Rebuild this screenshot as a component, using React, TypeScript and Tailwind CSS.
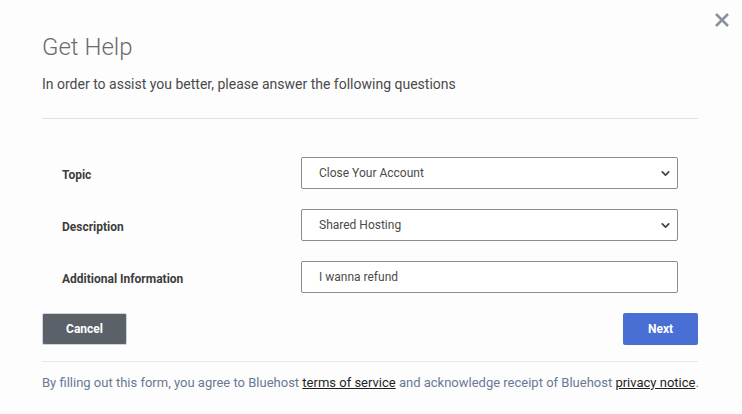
import { ChevronDown } from "lucide-react";

const rows = [
  { label: "Topic", value: "Close Your Account", select: true },
  { label: "Description", value: "Shared Hosting", select: true },
  { label: "Additional Information", value: "I wanna refund", select: false },
];

export default function App() {
  return (
    <div className="relative w-[742px] h-[414px] overflow-hidden bg-[#fdfdfe] font-['Roboto',sans-serif]">
      <button className="absolute right-[10px] top-[10px] w-[20px] h-[20px] flex items-center justify-center text-[#8a929c]">
        <svg width="16" height="16" viewBox="0 0 16 16" fill="none" stroke="currentColor" strokeWidth="2.6" strokeLinecap="butt">
          <path d="M2 2 L14 14 M14 2 L2 14" />
        </svg>
      </button>

      <div className="flex flex-col px-[42px] pt-[32px]">
        <h1 className="text-[24px] leading-[30px] font-light text-[#6b6b6b]">Get Help</h1>
        <p className="mt-[13px] text-[14px] leading-[18px] text-[#4a4a4a]">
          In order to assist you better, please answer the following questions
        </p>
        <div className="mt-[25px] h-px w-[656px] bg-[#dfe3e8]" />

        <div className="mt-[38px] flex flex-col gap-[20px] pl-[20px] pr-[20px]">
          {rows.map((r) => (
            <div key={r.label} className="flex items-center h-[32px]">
              <div className="w-[239px] pt-[3px] text-[12px] font-bold text-[#3d3d3d]">{r.label}</div>
              <div className="w-[377px] h-[32px] border border-[#8c8c8c] rounded-[2px] bg-white flex items-center justify-between pl-[17px] pr-[5px] text-[12px] text-[#4b4b4b]">
                <span>{r.value}</span>
                {r.select && <ChevronDown size={13} strokeWidth={3.2} className="text-[#444]" />}
              </div>
            </div>
          ))}
        </div>

        <div className="mt-[20px] flex items-center justify-between w-[656px]">
          <button className="w-[85px] h-[32px] bg-[#5a6169] text-white text-[12px] font-bold rounded-[2px] border border-[#d0d3d6]">
            Cancel
          </button>
          <button className="w-[75px] h-[32px] bg-[#4a6fd4] text-white text-[12px] font-bold rounded-[2px]">
            Next
          </button>
        </div>

        <div className="mt-[16px] h-px w-[656px] bg-[#e4e7eb]" />
        <p className="mt-[13px] text-[13px] leading-[16px] text-[#6a7894]">
          By filling out this form, you agree to Bluehost{" "}
          <a className="underline text-[#1f1f1f]">terms of service</a> and acknowledge receipt of Bluehost{" "}
          <a className="underline text-[#1f1f1f]">privacy notice</a>.
        </p>
      </div>
    </div>
  );
}
